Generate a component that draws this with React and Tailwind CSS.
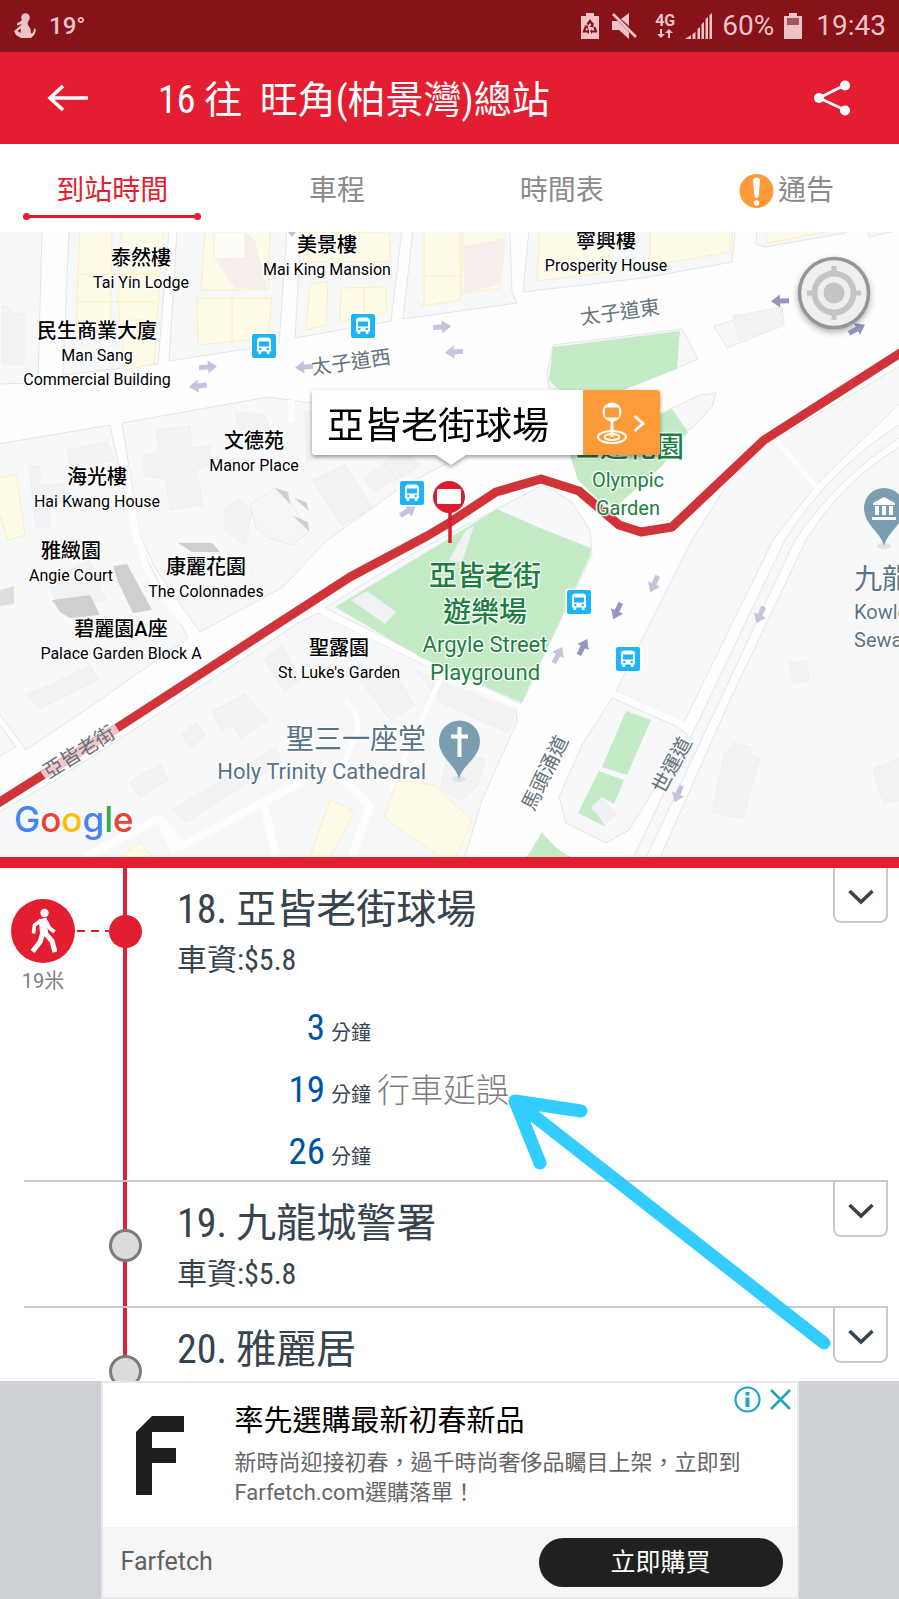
import React from "react";

const MAP_W = 899;
const HALO =
  "[text-shadow:1px_1px_1px_#fff,-1px_-1px_1px_#fff,1px_-1px_1px_#fff,-1px_1px_1px_#fff,0_0_3px_#fff]";

const places = [
  { x: 141, y: 13, zh: "泰然樓", en: ["Tai Yin Lodge"] },
  { x: 327, y: 0, zh: "美景樓", en: ["Mai King Mansion"] },
  { x: 606, y: -4, zh: "寧興樓", en: ["Prosperity House"] },
  { x: 97, y: 86, zh: "民生商業大廈", en: ["Man Sang", "Commercial Building"] },
  { x: 254, y: 196, zh: "文德苑", en: ["Manor Place"] },
  { x: 97, y: 232, zh: "海光樓", en: ["Hai Kwang House"] },
  { x: 71, y: 306, zh: "雅緻園", en: ["Angie Court"] },
  { x: 206, y: 322, zh: "康麗花園", en: ["The Colonnades"] },
  { x: 121, y: 384, zh: "碧麗園A座", en: ["Palace Garden Block A"] },
  { x: 339, y: 403, zh: "聖露園", en: ["St. Luke's Garden"] },
];

const streets = [
  { x: 351, y: 130, turn: "-rotate-8", name: "太子道西" },
  { x: 620, y: 80, turn: "-rotate-8", name: "太子道東" },
  { x: 79, y: 520, turn: "-rotate-32", name: "亞皆老街" },
  { x: 545, y: 541, turn: "-rotate-64", name: "馬頭涌道" },
  { x: 672, y: 533, turn: "-rotate-62", name: "世運道" },
];

const stops = [
  { no: 18, name: "亞皆老街球場", fare: "$5.8", walk: "19米", here: true,
    eta: [{ min: 3 }, { min: 19, note: "行車延誤" }, { min: 26 }] },
  { no: 19, name: "九龍城警署", fare: "$5.8", eta: [] },
  { no: 20, name: "雅麗居", eta: [] },
];

const left = (x) => ({ left: `${(x / MAP_W) * 100}%` });
const at = (x, y) => ({ left: `${(x / MAP_W) * 100}%`, top: y });

function StatusBar() {
  return (
    <div className="flex h-[52px] shrink-0 items-center bg-[#87121a] px-[13px] text-[#eec3c8]">
      <svg className="h-7 w-6" viewBox="0 0 24 28" fill="currentColor" aria-hidden="true">
        <circle cx="12.500" cy="5.500" r="4.300" />
        <path d="M9.500 8H15.500L14.500 12 17.500 17 18 21.500 20 20.500 21.500 16 23 18 21.500 22.500 18 26H8L3 23 1 19 7 14 9 12 4 13.500V11.500Z" />
        <path d="M4.500 19 8 16.500 7.500 21Z" fill="#87121a" />
      </svg>
      <span className="ml-3 text-[24px] font-medium">19°</span>
      <div className="ml-auto flex items-center">
        <svg className="h-7 w-[18px]" viewBox="0 0 18 28" fill="currentColor" aria-hidden="true">
          <path d="M5 1h8v3h5v23H0V4h5z" />
          <g fill="none" stroke="#87121a" strokeWidth="2.200">
            <path d="M6.500 12.500 9 9l2.500 3.500M4.500 15 3 19.500h4.500M13.500 15l1.500 4.500h-4.500" />
          </g>
          <path d="M12.500 10.500v4.500h-4zM8 17v5l-3-2.500zM11 17v5l-2-2.500zM3 13.500h4v4z" fill="#87121a" />
        </svg>
        <svg className="ml-3 h-7 w-[26px]" viewBox="0 0 26 28" fill="currentColor" aria-hidden="true">
          <path d="M1 9h6l11 11v7L8 18H1zM10 7l8-6v13z" />
          <path d="M2 2 25 25" stroke="currentColor" strokeWidth="2.600" />
        </svg>
        <span className="ml-[18px] flex flex-col items-center">
          <span className="text-[16px] leading-4 font-bold">4G</span>
          <svg className="h-2.5 w-4" viewBox="0 0 16 10" fill="currentColor" aria-hidden="true">
            <path d="M3 0h2v5h3L4 9 0 5h3zM11 9h2V4h3l-4-4-4 4h3z" />
          </svg>
        </span>
        <svg className="ml-2.5 h-7 w-[27px]" viewBox="0 0 27 28" fill="currentColor" aria-hidden="true">
          <path d="M0 27 6 23v4zM7.500 22l3-2v7h-3zM12.500 17l2.500-2v12h-2.500zM16.500 12l2.500-2v17h-2.500zM20.500 7 23 5v22h-2.500zM24.500 3 27 1v26h-2.500z" />
        </svg>
        <span className="ml-2.5 text-[28px] leading-7">60%</span>
        <svg className="ml-2.5 h-7 w-[18px]" viewBox="0 0 18 28" fill="currentColor" aria-hidden="true">
          <path d="M5 1h8v3h5v23H0V4h5z" />
          <path d="M3 6h12v7H3z" fill="#a8555c" />
        </svg>
        <span className="ml-3.5 text-[28px] leading-7">19:43</span>
      </div>
    </div>
  );
}

function Header() {
  return (
    <header className="flex h-[92px] shrink-0 items-center bg-[#e31e30] text-white">
      <button aria-label="返回" className="ml-[47px] h-7 w-[42px]">
        <svg viewBox="0 0 42 28" className="h-7 w-[42px]" fill="none" stroke="currentColor" strokeWidth="3.600" aria-hidden="true">
          <path d="M3 14H41M16 2 3 14l13 12" />
        </svg>
      </button>
      <h1 className="ml-[69px] flex-1 pt-1 text-[38px] leading-[56px] [font-family:'Roboto_Condensed','Liberation_Sans_Narrow','Noto_Sans_CJK_TC',sans-serif]">
        16 往&nbsp; 旺角(柏景灣)總站
      </h1>
      <button aria-label="分享" className="mr-[49px] h-9 w-9">
        <svg viewBox="0 0 36 36" className="h-9 w-9" fill="currentColor" aria-hidden="true">
          <path d="M31 5 5 18l26 12" fill="none" stroke="currentColor" strokeWidth="2.800" />
          <circle cx="31" cy="5.500" r="5" />
          <circle cx="5" cy="18" r="5" />
          <circle cx="31" cy="30.500" r="5" />
        </svg>
      </button>
    </header>
  );
}

function Tabs() {
  const base = "relative flex flex-1 items-center justify-center text-[28px] pt-1.5 ";
  return (
    <nav className="flex h-[88px] shrink-0 bg-white text-[#8b8b8b]">
      <button className={base + "text-[#e31e30]"}>
        到站時間
        <span className="absolute bottom-[14px] h-[3px] w-[170px] bg-[#e31e30]">
          <span className="absolute -top-0.5 -left-1 size-[7px] rounded-full bg-[#e31e30]" />
          <span className="absolute -top-0.5 -right-1 size-[7px] rounded-full bg-[#e31e30]" />
        </span>
      </button>
      <button className={base}>車程</button>
      <button className={base}>時間表</button>
      <button className={base + "gap-1"}>
        <svg className="size-[35px]" viewBox="0 0 35 35" aria-hidden="true">
          <circle cx="17.500" cy="16" r="17" fill="#ff9a3a" transform="translate(0 1)" />
          <path d="M14 7q0-3.500 3.500-3.500T21 7l-1.300 14q-.3 3-2.200 3t-2.200-3z" fill="#fff" />
          <circle cx="17.500" cy="29" r="2.700" fill="#fff" />
        </svg>
        通告
      </button>
    </nav>
  );
}

function RoadArrow({ x, y, turn, dark }) {
  return (
    <path
      d="M-9-2.500H0V-6.500L9 0 0 6.500V2.500H-9z"
      transform={`translate(${x} ${y}) rotate(${turn})`}
      fill={dark ? "#9496bf" : "#c3c4dc"}
    />
  );
}

function BusIcon({ x, y }) {
  return (
    <g transform={`translate(${x - 12} ${y - 12})`}>
      <rect x="-1.500" y="-1.500" width="27" height="27" rx="3" fill="#fff" />
      <rect width="24" height="24" rx="2" fill="#1db5f7" />
      <path d="M5 7q0-3.500 3.500-3.500h7Q19 3.500 19 7v10.500h-1.500V20h-2.700v-2.500H9.200V20H6.500v-2.500H5z" fill="#fff" />
      <path d="M7 7.500h10v5H7z" fill="#1db5f7" />
      <circle cx="8.300" cy="15" r="1.200" fill="#1db5f7" />
      <circle cx="15.700" cy="15" r="1.200" fill="#1db5f7" />
    </g>
  );
}

function MapDrawing() {
  return (
    <svg
      className="absolute inset-0 h-full w-full"
      viewBox="0 232 899 625"
      preserveAspectRatio="xMidYMid slice"
      aria-hidden="true"
    >
      <rect y="232" width="899" height="625" fill="#fefefe" />
      {/* city blocks */}
      <g fill="#f7f8fa" stroke="#e3e5e9" strokeWidth="1">
        <path d="M-2 230H42L38 383-2 384z" />
        <path d="M69 230H169L158 364 63 375z" />
        <path d="M177 230H287L279 344 169 361z" />
        <path d="M301 230H402L391 321 295 338z" />
        <path d="M413 230H510L512 292 517 303 403 319z" />
        <path d="M529 230H735L732 262 643 278 523 292z" />
        <path d="M757 230H850L845 233 765 247 756 244z" />
        <path d="M867 230H900L869 237z" />
        <path d="M-2 444 110 425 133 530 150 565 188 638 100 700 26 750-2 712z" />
        <path d="M122 423 268 397 312 403 315 400H560L520 430 449 462 400 488 325 542 283 587 200 632 155 568 140 535z" />
        <path d="M-2 722 16 747-2 757z" />
        <path d="M51 783 300 622 318 613 423 664 516 706 517 722 482 800 464 860H-2V812z" />
        <path d="M325 608 420 549 543 485 572 502 590 530 592 555 520 704z" />
        <path d="M553 345 682 329 698 359 677 368 600 395 549 388 547 375z" />
        <path d="M655 416 700 395 716 393 712 407 690 430z" />
        <path d="M714 326 735 320 782 307 784 325 727 348z" />
        <path d="M770 442 900 366V403L815 486 773 540 684 722 616 691 692 540 730 480z" />
        <path d="M902 446Q845 478 806 540L730 700 659 860H902z" />
        <path d="M612 698 676 726 688 735 629 830 606 843 566 823 559 797 582 745z" />
        <path d="M902 423Q830 468 785 540L632 860H645L795 540Q838 477 902 436z" />
      </g>
      {/* buildings */}
      <g fill="#f1f2f4" stroke="#eceef0" strokeWidth="1">
        <path d="M2 305 12 308V315L24 313V364H2z" />
        <path d="M157 430 190 426 192 448 210 446V465L196 470 203 505 170 510 166 480 144 475V455L158 452z" />
        <path d="M312 480 345 465 372 508 342 526z" />
        <path d="M364 478 384 464 398 478 374 492zM383 462 405 450 420 466 396 480z" />
        <path d="M68 450 107 442 114 460 70 468zM29 466H40V485L64 484V500L50 502V526L36 528z" />
        <path d="M225 508 240 498 252 512 245 545 225 530z" />
        <path d="M235 412 265 415 270 430 240 430zM305 412H330L340 450 307 462z" />
        <path d="M212 712 245 694 268 720 240 738 232 725 222 730zM182 735 196 722 206 735 190 748z" />
        <path d="M130 782 160 764 168 780 140 798zM172 810 275 748 282 762 186 822z" />
        <path d="M265 660 282 645 300 680 285 692zM360 680 390 666 415 705 390 720z" />
        <path d="M25 695 50 685 90 665 98 680 40 708zM48 580 90 560 105 600 60 610z" />
        <path d="M415 670 515 711 508 733 440 702zM450 745 485 760 478 785 462 800 440 790z" />
        <path d="M734 743 750 747 752 755 760 758 743 819 712 812 724 755z" />
        <path d="M789 663 807 661 809 681 794 683zM873 769 900 758V800L884 804z" />
        <path d="M733 316 781 307 784 326 738 340z" />
      </g>
      {/* shops */}
      <g fill="#fffbe9" stroke="#fdeebb" strokeWidth="1">
        <path d="M80 230H112L110 330H76zM122 230H163L154 364 125 370 118 300z" />
        <path d="M76 274H158M76 302H156M124 320H156" />
        <path d="M205 230H270L268 290H201zM197 298H272L268 338 198 345zM232 298V342" />
        <path d="M310 284 328 282 326 325 306 330zM341 288 386 287V312L340 322zM364 288V316M302 232H390V262H304z" />
        <path d="M424 230H460V300L424 306zM424 276H462M463 230H506L500 288 462 294zM413 300 424 306" />
        <path d="M540 230H610V272L537 281zM650 230H733L730 252 650 266z" />
        <path d="M765 230H835L768 243z" />
        <path d="M-2 478 16 474 25 535 8 540-2 510z" />
        <path d="M397 780 434 785 472 820 456 857H440L384 818zM330 800 355 812 330 857H310z" />
        <path d="M120 857 140 842 152 857z" />
      </g>
      <g fill="#f5eeea">
        <path d="M214 258 245 232 255 240 268 290 235 288z" />
        <path d="M464 246 506 238 500 284 464 294z" />
      </g>
      <path d="M214 232H245V258L214 259z" fill="#fdfcf6" stroke="#f6efd9" />
      <path d="M250 504 275 488 290 500 309 532 292 545 268 538 256 528z" fill="#f4f5f4" stroke="#e9eaeb" />
      <g fill="#cfcfcf">
        <path d="M275 488 288 492 290 504zM294 498 306 502 309 511zM293 516 308 522 309 531z" />
        <path d="M113 566 127 564 152 610 133 613 118 582zM52 600 90 595 100 615 70 618 60 612zM178 543H212L220 552H192z" />
        <path d="M0 590 14 586V604L0 606z" fill="#dedede" />
      </g>
      {/* lanes inside blocks */}
      <g fill="none" stroke="#fefefe" strokeWidth="8" strokeLinejoin="round">
        <path d="M175 852 160 818 85 857M160 818 182 846 320 772 345 780 370 806 352 857M264 806 276 857" />
        <path d="M345 700Q362 715 356 735L338 778M440 680 390 790" strokeWidth="5" />
        <path d="M291 400V422" strokeWidth="7" />
        <path d="M323 613 521 708M777 441 817 488M612 692 684 724" strokeWidth="5" />
        <path d="M140 540Q140 575 192 632" strokeWidth="6" />
        <path d="M116 420 138 545" strokeWidth="8" />
      </g>
      {/* parks */}
      <g fill="#c5eac6">
        <path d="M553 347 680 331 677 369 590 403 557 388 549 380z" />
        <path d="M570 455 672 409 688 432 662 466 618 505 600 502 578 480z" />
        <path d="M335 607 420 556 497 509 540 528 591 548 590 556 522 703 422 658z" />
        <path d="M626 711 651 720 627 775 602 767zM599 771 624 780 614 804 602 797 592 806 606 827 578 813z" />
        <path d="M542 832Q555 850 576 860H525z" />
      </g>
      <path d="M602 797 618 814 606 824 591 808z" fill="#eef0f1" />
      <path d="M351 600 367 591 396 612 385 624zM449 560 466 530 474 526 462 562z" fill="#eff1f3" />
      {/* arrows along roads */}
      <RoadArrow x={208} y={367} turn={-4} />
      <RoadArrow x={198} y={386} turn={174} />
      <RoadArrow x={304} y={367} turn={176} />
      <RoadArrow x={442} y={327} turn={-4} />
      <RoadArrow x={454} y={352} turn={176} />
      <RoadArrow x={780} y={301} turn={178} dark />
      <RoadArrow x={857} y={329} turn={-28} dark />
      <RoadArrow x={408} y={511} turn={-30} />
      <RoadArrow x={654} y={584} turn={115} />
      <RoadArrow x={617} y={611} turn={115} dark />
      <RoadArrow x={558} y={655} turn={-62} />
      <RoadArrow x={583} y={647} turn={-62} dark />
      <RoadArrow x={760} y={615} turn={115} />
      <RoadArrow x={678} y={794} turn={112} />
      <path d="M288 232H296L292 237z" fill="#c3c4dc" />
      {/* route */}
      <path
        d="M-5 805 117 728 350 577 427 536 449 523 496 492 541 479 579 491 619 525 641 532 672 527 764 440 905 350"
        fill="none" stroke="#d13438" strokeWidth="9" strokeLinejoin="round"
      />
      <path d="M43 775 117 728" stroke="#f6c6c9" strokeWidth="9" />
      <BusIcon x={264} y={346} />
      <BusIcon x={363} y={326} />
      <BusIcon x={412} y={493} />
      <BusIcon x={579} y={602} />
      <BusIcon x={628} y={659} />
      {/* selected stop */}
      <g>
        <path d="M450 508V543" stroke="#dc1c30" strokeWidth="3.500" />
        <circle cx="449" cy="497" r="16" fill="#dc1c30" />
        <rect x="437" y="489" width="24" height="15" rx="1.500" fill="#fff" />
      </g>
      {/* place pins */}
      <g fill="#7a9eb0">
        <ellipse cx="459" cy="779" rx="7" ry="3" fill="#dfe3e6" />
        <path d="M459 779C456 765 439 758 439 741A20.500 20.500 0 0 1 480 741C480 758 462 765 459 779z" />
        <path d="M459.500 727V757M451 736.500H468" stroke="#fff" strokeWidth="4" />
        <ellipse cx="884" cy="546" rx="7" ry="3" fill="#dfe3e6" />
        <path d="M884 546C881 532 864 525 864 508A20 20 0 0 1 904 508C904 525 887 532 884 546z" />
        <path d="M873 503 884 497 895 503V505H873zM875 506H879V515H875zM882 506H886V515H882zM889 506H893V515H889zM872 517H896V520H872z" fill="#fff" />
      </g>
    </svg>
  );
}

function MapView() {
  return (
    <section className="relative h-[625px] shrink-0 overflow-hidden">
      <MapDrawing />
      {places.map((p) => (
        <div
          key={p.zh}
          style={at(p.x, p.y)}
          className={"absolute -translate-x-1/2 text-center whitespace-nowrap text-black " + HALO}
        >
          <div className="text-[20px] leading-[26px] font-medium">{p.zh}</div>
          {p.en.map((line) => (
            <div key={line} className="text-[16px] leading-6">{line}</div>
          ))}
        </div>
      ))}
      {streets.map((s) => (
        <div key={s.name} style={at(s.x, s.y)} className="absolute -translate-x-1/2 -translate-y-1/2">
          <div className={"text-[20px] leading-6 whitespace-nowrap text-[#66737c] " + s.turn}>{s.name}</div>
        </div>
      ))}
      <div style={at(485, 327)} className={"absolute -translate-x-1/2 text-center whitespace-nowrap text-[#1a8040] " + HALO}>
        <div className="text-[28px] leading-9 font-medium">亞皆老街<br />遊樂場</div>
        <div className="text-[22px] leading-7">Argyle Street<br />Playground</div>
      </div>
      <div style={at(628, 198)} className={"absolute -translate-x-1/2 text-center whitespace-nowrap text-[#1a8040] " + HALO}>
        <div className="text-[28px] leading-9 font-medium">世運花園</div>
        <div className="text-[20px] leading-7">Olympic<br />Garden</div>
      </div>
      <div style={at(426, 490)} className={"absolute -translate-x-full text-right whitespace-nowrap text-[#587486] " + HALO}>
        <div className="text-[28px] leading-9">聖三一座堂</div>
        <div className="text-[22px] leading-7">Holy Trinity Cathedral</div>
      </div>
      <div style={at(854, 330)} className={"absolute whitespace-nowrap text-[#587486] " + HALO}>
        <div className="text-[28px] leading-9">九龍</div>
        <div className="text-[20px] leading-7">Kowloon<br />Sewage</div>
      </div>

      <div style={at(312, 158)} className="absolute drop-shadow-[0_2px_2px_rgba(0,0,0,0.4)]">
        <div className="flex h-[65px] overflow-hidden rounded-[3px] bg-white">
          <span className="pt-1 pr-[34px] pl-[15px] text-[37px] leading-[65px] whitespace-nowrap text-black">亞皆老街球場</span>
          <button aria-label="車站詳情" className="flex w-[77px] items-center justify-center bg-[#ff9a38]">
            <svg className="h-[44px] w-[52px]" viewBox="0 0 52 44" fill="none" stroke="#fff" strokeWidth="2" aria-hidden="true">
              <ellipse cx="17" cy="36" rx="14" ry="6" />
              <ellipse cx="17" cy="36" rx="7.500" ry="3" />
              <path d="M17 16V36" strokeWidth="3" />
              <circle cx="17" cy="11" r="9.500" fill="#fff" stroke="none" />
              <rect x="10" y="6.500" width="14" height="10" rx="1" fill="#ff9a38" stroke="none" />
              <path d="M39.500 15 48 22.500 39.500 30" strokeWidth="2.800" />
            </svg>
          </button>
        </div>
        <svg className="ml-[124px] h-2.5 w-[30px]" viewBox="0 0 30 10" aria-hidden="true">
          <path d="M0 0H30L15 10z" fill="#fff" />
        </svg>
      </div>

      <button aria-label="定位" style={at(797, 24)} className="absolute size-[74px] rounded-full drop-shadow-[0_3px_3px_rgba(0,0,0,0.3)]">
        <svg viewBox="0 0 74 74" className="size-[74px]" aria-hidden="true">
          <circle cx="37" cy="37" r="34.500" fill="#efefef" stroke="#959595" strokeWidth="3.500" />
          <circle cx="37" cy="37" r="19.500" fill="none" stroke="#c4c4c4" strokeWidth="6" />
          <path d="M37 10V18M37 56V64M10 37H18M56 37H64" stroke="#c4c4c4" strokeWidth="5" />
          <circle cx="37" cy="37" r="10.500" fill="#c4c4c4" />
        </svg>
      </button>

      <div className="absolute bottom-4 left-[14px] text-[35px] leading-[44px] font-medium [font-family:Inter,sans-serif] [text-shadow:0_0_3px_#fff]">
        <span className="text-[#4285f4]">G</span>
        <span className="text-[#ea4335]">o</span>
        <span className="text-[#fbbc05]">o</span>
        <span className="text-[#4285f4]">g</span>
        <span className="text-[#34a853]">l</span>
        <span className="text-[#ea4335]">e</span>
      </div>
    </section>
  );
}

function WalkBadge() {
  return (
    <span className="ml-[11px] flex size-16 shrink-0 items-center justify-center rounded-full bg-[#e31e30]">
      <svg className="h-[46px] w-7" viewBox="0 0 28 46" fill="none" stroke="#fff" strokeLinecap="butt" strokeLinejoin="round" aria-hidden="true">
        <circle cx="15.500" cy="5" r="4.200" fill="#fff" stroke="none" />
        <path d="M10.500 12 17 10.500 18.500 27 12 28z" fill="#fff" strokeWidth="1.500" />
        <path d="M12 12.500 5.500 17 4.500 25.500M17 13l3.500 7 5 4" strokeWidth="3.600" />
        <path d="M13.500 26 11 34 3.500 43.500M17 26l6 7 3 11" strokeWidth="5" />
      </svg>
    </span>
  );
}

function Stop({ stop, first }) {
  return (
    <li>
      {!first && <hr className="relative z-10 mr-[11px] ml-6 border-t-2 border-[#c9c9c9]" />}
      <div className="flex items-stretch">
        <div className="relative mr-[35px] w-[142px] shrink-0">
          <div className="absolute inset-y-0 left-[123px] w-1 bg-[#e02238]" />
          <div className="relative mt-[31px] flex h-16 items-center justify-end">
            {stop.walk && (
              <>
                <WalkBadge />
                <svg className="h-0.5 flex-1" viewBox="0 0 34 2" preserveAspectRatio="none" aria-hidden="true">
                  <path d="M2 1H34" stroke="#e31e30" strokeWidth="2" strokeDasharray="8 6" />
                </svg>
              </>
            )}
            <span
              className={
                stop.here
                  ? "size-[33px] shrink-0 rounded-full bg-[#e31e30]"
                  : "size-[33px] shrink-0 rounded-full border-[3px] border-[#7b7b7b] bg-[#dadcdb]"
              }
            />
          </div>
          {stop.walk && (
            <div className="ml-[11px] w-16 text-center text-[20px] leading-9 text-[#7d7d7d]">{stop.walk}</div>
          )}
        </div>
        <div className="flex-1 pt-3.5 pb-2.5 text-[#37444e] [font-family:'Roboto_Condensed','Liberation_Sans_Narrow','Noto_Sans_CJK_TC',sans-serif]">
          <h2 className="text-[40px] leading-[56px] whitespace-nowrap">{stop.no}. {stop.name}</h2>
          {stop.fare && <p className="text-[30px] leading-[44px]">車資:{stop.fare}</p>}
          {stop.eta.length > 0 && (
            <ul className="mt-[21px] -mb-[7px] flex flex-col gap-3">
              {stop.eta.map((e) => (
                <li key={e.min} className="flex h-[50px] items-baseline gap-1.5 leading-[50px]">
                  <span className="w-[148px] text-right text-[37px] text-[#0054a6]">{e.min}</span>
                  <span className="text-[20px]">分鐘</span>
                  {e.note && <span className="text-[33px] font-light text-[#7d7d7d]">{e.note}</span>}
                </li>
              ))}
            </ul>
          )}
        </div>
        <button
          aria-label="展開"
          className="mr-[11px] flex size-[55px] shrink-0 items-center justify-center self-start rounded-b-lg border-2 border-t-0 border-[#c9c9c9] pt-1"
        >
          <svg className="h-4 w-[26px]" viewBox="0 0 26 16" fill="none" stroke="#37444e" strokeWidth="3.600" aria-hidden="true">
            <path d="M1.500 2 13 13 24.500 2" />
          </svg>
        </button>
      </div>
    </li>
  );
}

function StopList() {
  return (
    <main className="relative min-h-0 flex-1 overflow-hidden border-t-[11px] border-[#e31e30] bg-white">
      <ol>
        {stops.map((s, i) => (
          <Stop key={s.no} stop={s} first={i === 0} />
        ))}
      </ol>
      <svg
        style={left(503)}
        className="absolute top-[222px] z-20 h-[264px] w-[332px]"
        viewBox="0 0 332 264"
        fill="none" stroke="#33ccff" strokeLinecap="round" strokeLinejoin="round"
        aria-hidden="true"
      >
        <path d="M321 253 12 11M78 21 12 11 37 73" strokeWidth="13" />
        <path d="M12 11 38 15 22 35z" fill="#33ccff" strokeWidth="6" />
      </svg>
    </main>
  );
}

function Ad() {
  return (
    <aside className="flex shrink-0 justify-center bg-[#ccd0d5]">
      <div className="relative w-full max-w-[698px] border-2 border-[#e6e8ea] bg-white">
        <div className="flex h-[144px]">
          <svg className="mt-[33px] ml-[33px] h-[79px] w-12 shrink-0" viewBox="0 0 48 79" fill="#1f201e" aria-hidden="true">
            <path d="M16 0H48V16H16V32H40V47H16V79H0V16z" />
          </svg>
          <div className="ml-[51px] pt-[17px] pr-12">
            <h3 className="text-[29px] leading-[42px] text-black">率先選購最新初春新品</h3>
            <p className="mt-1.5 text-[22px] leading-[30px] text-[#666]">
              新時尚迎接初春，過千時尚奢侈品矚目上架，立即到Farfetch.com選購落單！
            </p>
          </div>
        </div>
        <div className="flex h-[70px] items-center justify-between bg-[#f6f6f7] pr-3.5 pl-[18px]">
          <span className="text-[25px] text-[#616161]">Farfetch</span>
          <button className="h-[49px] w-[244px] rounded-full bg-[#1f211f] text-[25px] leading-[49px] text-white">立即購買</button>
        </div>
        <div className="absolute top-[3px] right-1.5 flex items-center gap-[9px] text-[#1fa5bf]">
          <button aria-label="廣告資訊">
            <svg className="size-[27px]" viewBox="0 0 27 27" fill="none" stroke="currentColor" aria-hidden="true">
              <circle cx="13.500" cy="13.500" r="12" strokeWidth="2.200" />
              <path d="M13.500 11.500V21M13.500 6V9.500" strokeWidth="4" />
            </svg>
          </button>
          <button aria-label="關閉廣告">
            <svg className="size-[21px]" viewBox="0 0 21 21" fill="none" stroke="currentColor" strokeWidth="2.600" aria-hidden="true">
              <path d="M1 1 20 20M20 1 1 20" />
            </svg>
          </button>
        </div>
      </div>
    </aside>
  );
}

export default function App() {
  return (
    <div
      lang="zh-Hant"
      className="flex h-screen flex-col overflow-hidden bg-white [font-family:Roboto,'Noto_Sans_CJK_TC',sans-serif]"
    >
      <StatusBar />
      <Header />
      <Tabs />
      <MapView />
      <StopList />
      <Ad />
    </div>
  );
}
